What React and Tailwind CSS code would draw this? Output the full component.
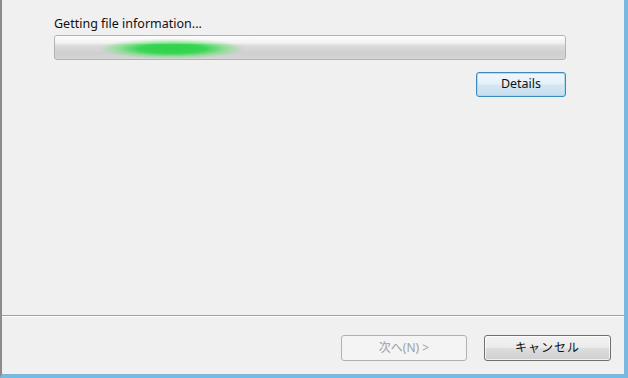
export default function App() {
  const font = { fontFamily: '"Segoe UI", "Noto Sans", "Noto Sans CJK JP", sans-serif' };
  return (
    <div
      className="w-[628px] h-[378px] bg-[#f0f0f0] flex flex-col border-l-2 border-l-[#8c8c8c] border-r-4 border-r-[#7ab8df] border-b-4 border-b-[#7ab8df] text-[12px] text-[#111111]"
      style={font}
    >
      <div className="h-[315px] flex flex-col pl-[52px] pr-[58px] pt-[15px]">
        <div className="h-[18px] leading-[18px] text-[12.5px]">Getting file information...</div>
        <div className="mt-[2px] relative h-[25px] rounded-[3px] border border-[#b2b2b2] bg-[linear-gradient(to_bottom,#f6f6f6_0%,#ececec_30%,#dadada_45%,#cfcfcf_75%,#d6d6d6_100%)] overflow-hidden">
          <div className="absolute left-[44px] top-0 w-[146px] h-full bg-[radial-gradient(ellipse_closest-side_at_50%_55%,#2fd14a_0%,#3ad554_45%,rgba(120,225,130,0.65)_75%,rgba(200,240,200,0)_100%)]" />
          <div className="absolute inset-x-0 top-0 h-[8px] bg-[linear-gradient(to_bottom,rgba(255,255,255,0.7),rgba(255,255,255,0.2))]" />
        </div>
        <div className="flex justify-end mt-[12px]">
          <div className="w-[90px] h-[25px] rounded-[3px] border border-[#3c8ab9] bg-[linear-gradient(to_bottom,#f0f7fc_0%,#e4f0f8_48%,#d4e6f2_52%,#c8dfee_100%)] flex items-center justify-center shadow-[inset_0_0_0_1px_rgba(160,220,245,0.9)] text-[12.5px]">
            Details
          </div>
        </div>
      </div>
      <div className="h-[2px] border-t border-t-[#a0a0a0] border-b border-b-[#ffffff]" />
      <div className="flex-1 flex justify-end items-start pt-[18px] pr-[13px] gap-[17px]">
        <div className="w-[126px] h-[26px] rounded-[3px] border border-[#adb2b5] bg-[#f4f4f4] flex items-center justify-center text-[#a0a0a0]">
          次へ(N) &gt;
        </div>
        <div className="w-[127px] h-[26px] rounded-[3px] border border-[#707070] bg-[linear-gradient(to_bottom,#f2f2f2_0%,#ebebeb_48%,#dddddd_52%,#cfcfcf_100%)] flex items-center justify-center shadow-[inset_0_0_0_1px_rgba(255,255,255,0.7)] tracking-[1px]">
          キャンセル
        </div>
      </div>
    </div>
  );
}
